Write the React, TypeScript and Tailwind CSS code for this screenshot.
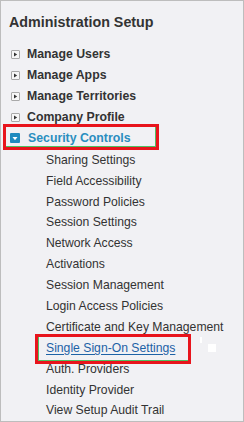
const topItems = ["Manage Users", "Manage Apps", "Manage Territories", "Company Profile"];

const subItems = [
  "Sharing Settings",
  "Field Accessibility",
  "Password Policies",
  "Session Settings",
  "Network Access",
  "Activations",
  "Session Management",
  "Login Access Policies",
  "Certificate and Key Management",
  "Single Sign-On Settings",
  "Auth. Providers",
  "Identity Provider",
  "View Setup Audit Trail",
];

function ExpandIcon() {
  return (
    <span className="flex h-[9px] w-[9px] items-center justify-center rounded-[1px] border border-[#a9a9a9] bg-[#f7f7f7]">
      <svg width="5" height="5" viewBox="0 0 5 5">
        <path d="M1 0.5 L4.2 2.5 L1 4.5 Z" fill="#333" />
      </svg>
    </span>
  );
}

function CollapseIcon() {
  return (
    <span className="flex h-[10px] w-[10px] items-center justify-center rounded-[1px] bg-[#1f8bbf]">
      <svg width="6" height="5" viewBox="0 0 6 5">
        <path d="M0.5 1 L5.5 1 L3 4.2 Z" fill="#fff" />
      </svg>
    </span>
  );
}

export default function App() {
  return (
    <div
      className="h-[422px] w-[244px] overflow-hidden border border-[#bdbdbd] bg-[#f1f1f4] pt-[12px] text-[#2b2b2b]"
      style={{ fontFamily: '"Liberation Sans", Arial, sans-serif' }}
    >
      {/* Heading */}
      <div className="mb-[10.5px] flex h-[20px] items-center pl-[8px] text-[14.3px] font-bold text-[#333]">
        Administration Setup
      </div>

      {/* Collapsed sections */}
      {topItems.map((label) => (
        <div key={label} className="flex h-[21px] items-center gap-[7px] pl-[10px] text-[12.3px] font-bold text-[#333]">
          <ExpandIcon />
          <span>{label}</span>
        </div>
      ))}

      {/* Expanded section, highlighted */}
      <div className="relative flex h-[21px] items-center gap-[8px] pl-[9px] text-[12.3px] font-bold text-[#2a8ec0]">
        <span className="pointer-events-none absolute left-[2px] top-[-4px] h-[26px] w-[156px] border-[3px] border-[#e8141c]">
          <span className="block h-full w-full border-b border-r border-[#4fbf62]" />
        </span>
        <CollapseIcon />
        <span>Security Controls</span>
      </div>

      <div className="pt-[1px]">
        {subItems.map((label) => {
          const active = label === "Single Sign-On Settings";
          return (
            <div key={label} className="relative flex h-[20.9px] items-center pl-[45px] text-[12.2px] text-[#333]">
              {active && (
                <>
                  <span className="pointer-events-none absolute left-[34px] top-[-4px] h-[30px] w-[156px] border-[3px] border-[#e8141c]">
                    <span className="block h-full w-full border-b border-l border-[#4fbf62]" />
                  </span>
                  <span className="absolute left-[199px] top-[-1px] h-[6px] w-[2px] bg-white" />
                  <span className="absolute left-[207px] top-[6px] h-[8px] w-[8px] bg-white" />
                </>
              )}
              <span className={active ? "text-[#1d62a6] underline underline-offset-[2px]" : ""}>{label}</span>
            </div>
          );
        })}
      </div>
    </div>
  );
}
